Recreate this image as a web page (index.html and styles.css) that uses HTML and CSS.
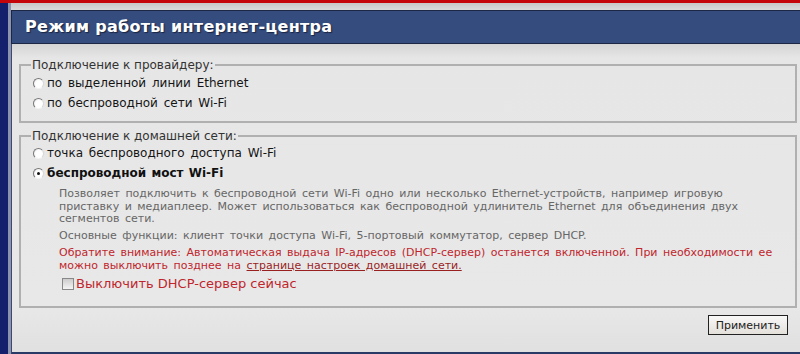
FILE: index.html
```html
<!DOCTYPE html>
<html lang="ru">
  <head>
    <meta charset="UTF-8" />
    <title>Режим работы интернет-центра</title>
    <link rel="stylesheet" href="styles.css">
  </head>
  <body>
    <div class="topbar"></div>
    <div class="layout">
      <div class="side"></div>
      <div class="main">
        <h1 class="title">Режим работы интернет-центра</h1>
        <div class="content">
          <fieldset class="group">
            <legend>Подключение к провайдеру:</legend>
            <label class="opt"><span class="radio"></span>по выделенной линии Ethernet</label>
            <label class="opt"><span class="radio"></span>по беспроводной сети Wi-Fi</label>
          </fieldset>

          <fieldset class="group home">
            <legend>Подключение к домашней сети:</legend>
            <label class="opt"><span class="radio"></span>точка беспроводного доступа Wi-Fi</label>
            <label class="opt selected"><span class="radio checked"></span>беспроводной мост Wi-Fi</label>
            <div class="details">
              <p>Позволяет подключить к беспроводной сети Wi-Fi одно или несколько Ethernet-устройств, например игровую приставку и медиаплеер. Может использоваться как беспроводной удлинитель Ethernet для объединения двух сегментов сети.</p>
              <p>Основные функции: клиент точки доступа Wi-Fi, 5-портовый коммутатор, сервер DHCP.</p>
              <p class="warn">Обратите внимание: Автоматическая выдача IP-адресов (DHCP-сервер) останется включенной. При необходимости ее можно выключить позднее на <a href="#">странице настроек домашней сети.</a></p>
              <label class="check"><span class="box"></span>Выключить DHCP-сервер сейчас</label>
            </div>
          </fieldset>

          <div class="actions">
            <button class="apply">Применить</button>
          </div>
        </div>
      </div>
    </div>
  </body>
</html>
```

FILE: styles.css
```css
html, body {
  margin: 0;
  height: 100%;
}

body {
  font-family: "DejaVu Sans", Verdana, sans-serif;
  background: #d8d8d8;
  overflow: hidden;
}

.topbar {
  height: 3px;
  background: #c4060a;
}

.layout {
  display: flex;
  height: 351px;
}

.side {
  width: 8px;
  background: #14206b;
  flex-shrink: 0;
}

.main {
  flex: 1;
  padding: 7px 0 0 3px;
  background: linear-gradient(#c8c8c8, #dcdcdc 8px);
  display: flex;
  flex-direction: column;
  box-shadow: inset 3px 0 0 #8b93ad;
}

.title {
  margin: 0;
  height: 32px;
  line-height: 32px;
  padding-left: 13px;
  background: #354c7f;
  border-top: 1px solid #1b2744;
  border-bottom: 1px solid #1b2744;
  border-left: 1px solid #1b2744;
  color: #fff;
  font-size: 16px;
  letter-spacing: 0.3px;
  font-weight: bold;
  text-shadow: 1px 1px 1px #1a2440;
}

.content {
  flex: 1;
  background: linear-gradient(#d4d4d4, #e6e6e6 14px, #e8e8e8 85%, #e0e0e0);
  border-left: 1px solid #3a4a72;
  border-bottom: 2px solid #2a3a66;
  padding: 14px 3px 0 7px;
  display: flex;
  flex-direction: column;
}

.group {
  margin: 0 0 6px 0;
  padding: 1px 10px 8px 11px;
  border: 2px solid #b0b0b0;
}

.group.home {
  padding-top: 0;
  padding-bottom: 15px;
}

.group legend {
  font-size: 12px;
  color: #333;
  padding: 0 1px;
  margin-left: -1px;
}

.opt {
  display: flex;
  align-items: center;
  height: 20px;
  font-size: 12px;
  word-spacing: 2px;
  color: #151515;
}

.opt.selected {
  font-weight: bold;
  word-spacing: 1px;
  color: #111;
}

.radio {
  box-sizing: border-box;
  width: 11px;
  height: 11px;
  border-radius: 50%;
  border: 1px solid;
  border-color: #777 #d8d8d8 #f4f4f4 #777;
  background: radial-gradient(circle at 60% 60%, #fff 45%, #e4e4e4 100%);
  margin: 0 3px 0 1px;
  position: relative;
}

.radio.checked::after {
  content: "";
  position: absolute;
  left: 3px;
  top: 3px;
  width: 3px;
  height: 3px;
  border-radius: 50%;
  background: #111;
}

.details {
  padding: 5px 10px 0 27px;
  font-size: 11px;
  word-spacing: 2px;
  color: #666;
}

.details p {
  margin: 0 0 4px 0;
  line-height: 12.5px;
}

.details .warn {
  color: #c0262c;
  line-height: 13px;
}

.warn a {
  color: #9a1f1f;
}

.check {
  display: flex;
  align-items: center;
  font-size: 13px;
  word-spacing: 0;
  color: #c0262c;
  margin: 4px 0 0 3px;
}

.box {
  width: 10px;
  height: 10px;
  border: 1px solid #888;
  background: linear-gradient(#ccc, #f4f4f4);
  margin-right: 2px;
}

.actions {
  display: flex;
  justify-content: flex-end;
  padding-right: 9px;
  margin-top: 1px;
}

.apply {
  font-family: "DejaVu Sans", Verdana, sans-serif;
  font-size: 11px;
  color: #222;
  background: linear-gradient(#f8f8f8, #e4e0da);
  border: 1px solid #222;
  padding: 0 6px;
  width: 80px;
  height: 20px;
}
```
